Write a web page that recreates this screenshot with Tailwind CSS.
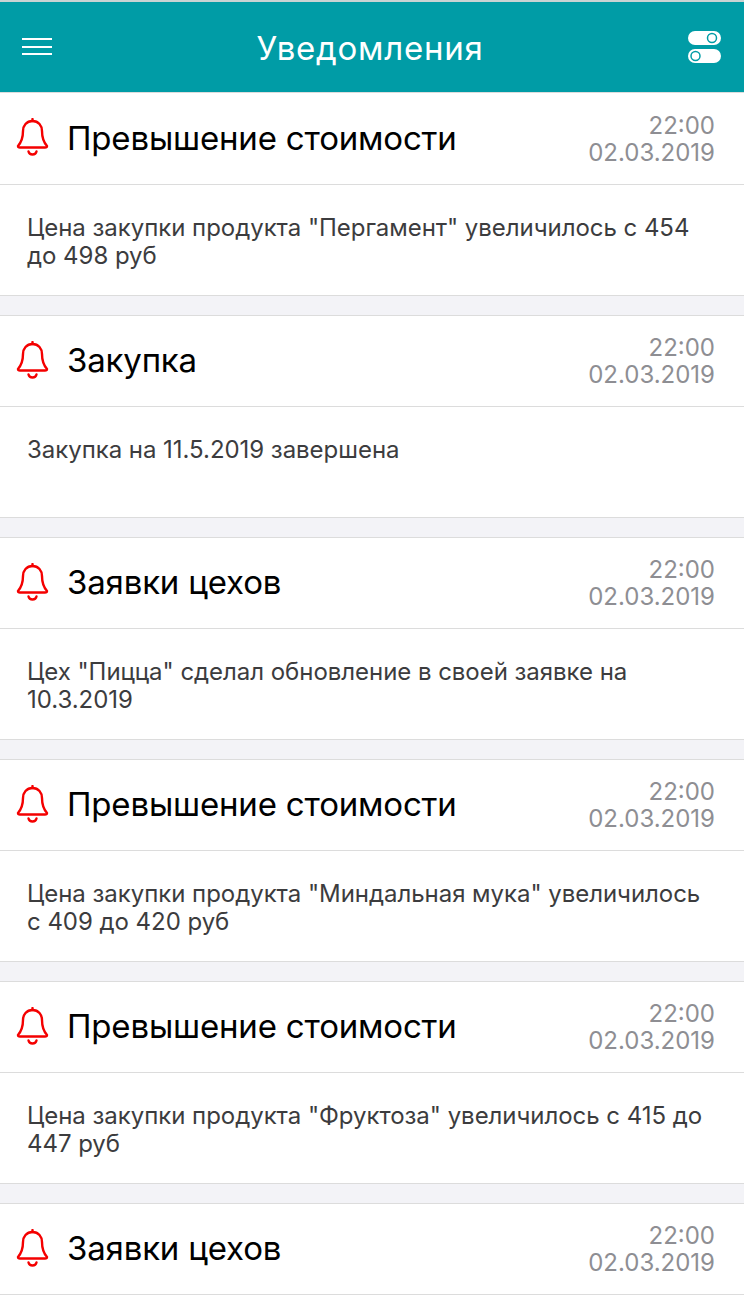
<!DOCTYPE html>
<html lang="ru">
<head>
    <meta charset="UTF-8">
    <meta name="viewport" content="width=device-width, initial-scale=1.0">
    <title>Уведомления</title>
    <script src="https://cdn.jsdelivr.net/npm/@tailwindcss/browser@4"></script>
</head>
<body class="bg-[#f3f3f7] h-[1302px] overflow-hidden font-['Inter',sans-serif]">
    <header class="h-[93px] bg-[#009ca6] border-t-2 border-b border-t-[#c9d3d3] border-b-[#dcdcdc] flex items-center justify-between pl-[22px] pr-[23px]">
        <svg width="30" height="20" viewBox="0 0 30 20"><path d="M0 2h30M0 10h30M0 17h30" stroke="#fff" stroke-width="2"/></svg>
        <h1 class="text-[33px] text-white pt-[4px] tracking-[0.75px]">Уведомления</h1>
        <svg width="33" height="32" viewBox="0 0 33 32"><rect x="0" y="0" width="33" height="14" rx="7" fill="#fff"/><rect x="0" y="18" width="33" height="14" rx="7" fill="#fff"/><circle cx="24" cy="7" r="4.500" fill="none" stroke="#009ca6" stroke-width="1.500"/><circle cx="7.500" cy="25" r="4.500" fill="none" stroke="#009ca6" stroke-width="1.500"/></svg>
    </header>

    <main class="flex flex-col gap-[19px]">
        <article class="bg-white border-b border-[#dcdcdc] h-[203px]">
            <div class="h-[92px] border-b border-[#dcdcdc] flex items-center pl-[16px] pr-[29px]">
                <svg width="33" height="41" viewBox="0 0 33 41" fill="none" stroke="#f40000" stroke-width="2.400" stroke-linejoin="round" stroke-linecap="round" class="mr-[18px]"><path d="M16.500 3c-6 0-9.500 4.500-9.500 10 0 6-1 10.500-5 15 0 1 1 1.500 2 1.500h25c1 0 2-.5 2-1.500-4-4.500-5-9-5-15 0-5.500-3.500-10-9.500-10z"/><path d="M16.500 1v2"/><path d="M12.500 33.500c.5 2 2 3 4 3s3.500-1 4-3"/></svg>
                <h2 class="text-[33px] text-black flex-1 tracking-[-0.18px]">Превышение стоимости</h2>
                <div class="text-right text-[24px] leading-[27px] text-[#8e8e93]"><div>22:00</div><div>02.03.2019</div></div>
            </div>
            <p class="px-[27px] pt-[29px] text-[24px] leading-[28px] text-[#3c3c3e] tracking-[-0.04px]">Цена закупки продукта "Пергамент" увеличилось с 454 до 498 руб</p>
        </article>
        <article class="bg-white border-y border-[#dcdcdc] h-[203px]">
            <div class="h-[91px] border-b border-[#dcdcdc] flex items-center pl-[16px] pr-[29px]">
                <svg width="33" height="41" viewBox="0 0 33 41" fill="none" stroke="#f40000" stroke-width="2.400" stroke-linejoin="round" stroke-linecap="round" class="mr-[18px]"><path d="M16.500 3c-6 0-9.500 4.500-9.500 10 0 6-1 10.500-5 15 0 1 1 1.500 2 1.500h25c1 0 2-.5 2-1.500-4-4.500-5-9-5-15 0-5.500-3.500-10-9.500-10z"/><path d="M16.500 1v2"/><path d="M12.500 33.500c.5 2 2 3 4 3s3.500-1 4-3"/></svg>
                <h2 class="text-[33px] text-black flex-1 tracking-[-0.18px]">Закупка</h2>
                <div class="text-right text-[24px] leading-[27px] text-[#8e8e93]"><div>22:00</div><div>02.03.2019</div></div>
            </div>
            <p class="px-[27px] pt-[29px] text-[24px] leading-[28px] text-[#3c3c3e] tracking-[-0.04px]">Закупка на 11.5.2019 завершена</p>
        </article>
        <article class="bg-white border-y border-[#dcdcdc] h-[203px]">
            <div class="h-[91px] border-b border-[#dcdcdc] flex items-center pl-[16px] pr-[29px]">
                <svg width="33" height="41" viewBox="0 0 33 41" fill="none" stroke="#f40000" stroke-width="2.400" stroke-linejoin="round" stroke-linecap="round" class="mr-[18px]"><path d="M16.500 3c-6 0-9.500 4.500-9.500 10 0 6-1 10.500-5 15 0 1 1 1.500 2 1.500h25c1 0 2-.5 2-1.500-4-4.500-5-9-5-15 0-5.500-3.500-10-9.500-10z"/><path d="M16.500 1v2"/><path d="M12.500 33.500c.5 2 2 3 4 3s3.500-1 4-3"/></svg>
                <h2 class="text-[33px] text-black flex-1 tracking-[-0.18px]">Заявки цехов</h2>
                <div class="text-right text-[24px] leading-[27px] text-[#8e8e93]"><div>22:00</div><div>02.03.2019</div></div>
            </div>
            <p class="px-[27px] pt-[29px] text-[24px] leading-[28px] text-[#3c3c3e] tracking-[-0.04px]">Цех "Пицца" сделал обновление в своей заявке на 10.3.2019</p>
        </article>
        <article class="bg-white border-y border-[#dcdcdc] h-[203px]">
            <div class="h-[91px] border-b border-[#dcdcdc] flex items-center pl-[16px] pr-[29px]">
                <svg width="33" height="41" viewBox="0 0 33 41" fill="none" stroke="#f40000" stroke-width="2.400" stroke-linejoin="round" stroke-linecap="round" class="mr-[18px]"><path d="M16.500 3c-6 0-9.500 4.500-9.500 10 0 6-1 10.500-5 15 0 1 1 1.500 2 1.500h25c1 0 2-.5 2-1.500-4-4.500-5-9-5-15 0-5.500-3.500-10-9.500-10z"/><path d="M16.500 1v2"/><path d="M12.500 33.500c.5 2 2 3 4 3s3.500-1 4-3"/></svg>
                <h2 class="text-[33px] text-black flex-1 tracking-[-0.18px]">Превышение стоимости</h2>
                <div class="text-right text-[24px] leading-[27px] text-[#8e8e93]"><div>22:00</div><div>02.03.2019</div></div>
            </div>
            <p class="px-[27px] pt-[29px] text-[24px] leading-[28px] text-[#3c3c3e] tracking-[-0.04px]">Цена закупки продукта "Миндальная мука" увеличилось с 409 до 420 руб</p>
        </article>
        <article class="bg-white border-y border-[#dcdcdc] h-[203px]">
            <div class="h-[91px] border-b border-[#dcdcdc] flex items-center pl-[16px] pr-[29px]">
                <svg width="33" height="41" viewBox="0 0 33 41" fill="none" stroke="#f40000" stroke-width="2.400" stroke-linejoin="round" stroke-linecap="round" class="mr-[18px]"><path d="M16.500 3c-6 0-9.500 4.500-9.500 10 0 6-1 10.500-5 15 0 1 1 1.500 2 1.500h25c1 0 2-.5 2-1.500-4-4.500-5-9-5-15 0-5.500-3.500-10-9.500-10z"/><path d="M16.500 1v2"/><path d="M12.500 33.500c.5 2 2 3 4 3s3.500-1 4-3"/></svg>
                <h2 class="text-[33px] text-black flex-1 tracking-[-0.18px]">Превышение стоимости</h2>
                <div class="text-right text-[24px] leading-[27px] text-[#8e8e93]"><div>22:00</div><div>02.03.2019</div></div>
            </div>
            <p class="px-[27px] pt-[29px] text-[24px] leading-[28px] text-[#3c3c3e] tracking-[-0.04px]">Цена закупки продукта "Фруктоза" увеличилось с 415 до 447 руб</p>
        </article>
        <article class="bg-white border-y border-[#dcdcdc] h-[203px]">
            <div class="h-[91px] border-b border-[#dcdcdc] flex items-center pl-[16px] pr-[29px]">
                <svg width="33" height="41" viewBox="0 0 33 41" fill="none" stroke="#f40000" stroke-width="2.400" stroke-linejoin="round" stroke-linecap="round" class="mr-[18px]"><path d="M16.500 3c-6 0-9.500 4.500-9.500 10 0 6-1 10.500-5 15 0 1 1 1.500 2 1.500h25c1 0 2-.5 2-1.500-4-4.500-5-9-5-15 0-5.500-3.500-10-9.500-10z"/><path d="M16.500 1v2"/><path d="M12.500 33.500c.5 2 2 3 4 3s3.500-1 4-3"/></svg>
                <h2 class="text-[33px] text-black flex-1 tracking-[-0.18px]">Заявки цехов</h2>
                <div class="text-right text-[24px] leading-[27px] text-[#8e8e93]"><div>22:00</div><div>02.03.2019</div></div>
            </div>
        </article>
    </main>
</body>
</html>
